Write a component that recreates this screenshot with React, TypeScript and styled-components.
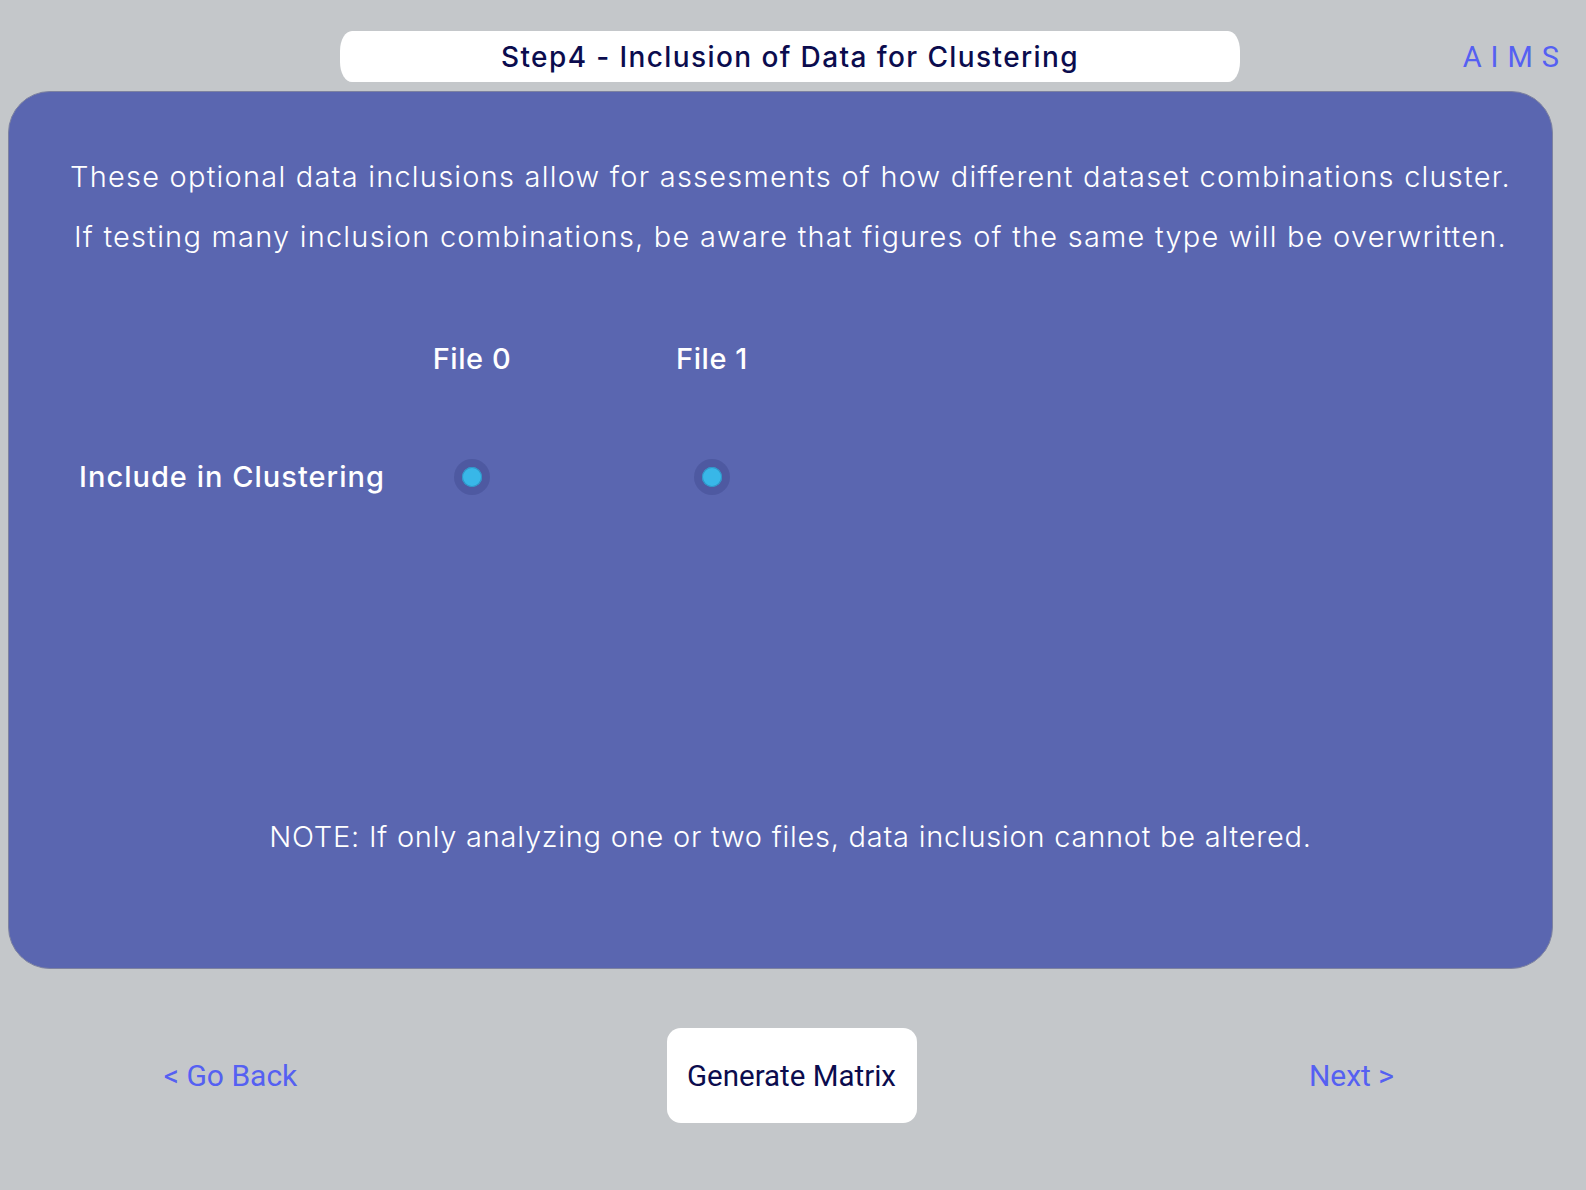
import React from "react";
import styled, { createGlobalStyle } from "styled-components";

const GlobalStyle = createGlobalStyle`
  body {
    margin: 0;
    background: #c4c7ca;
    font-family: "Inter", "Liberation Sans", sans-serif;
  }
`;

const files = ["File 0", "File 1"];

export default function App() {
  return (
    <>
      <GlobalStyle />
      <Page>
        <Header>
          <TitlePill>Step4 - Inclusion of Data for Clustering</TitlePill>
          <Brand>AIMS</Brand>
        </Header>

        <Panel>
          <Intro>
            <p>These optional data inclusions allow for assesments of how different dataset combinations cluster.</p>
            <p>If testing many inclusion combinations, be aware that figures of the same type will be overwritten.</p>
          </Intro>

          <InclusionGrid>
            <span />
            {files.map((f) => (
              <ColumnHead key={f}>{f}</ColumnHead>
            ))}
            <RowLabel>Include in Clustering</RowLabel>
            {files.map((f) => (
              <Cell key={f}>
                <Radio aria-label={`include ${f}`} />
              </Cell>
            ))}
          </InclusionGrid>

          <Note>NOTE: If only analyzing one or two files, data inclusion cannot be altered.</Note>
        </Panel>

        <Nav>
          <NavLink>&lt; Go Back</NavLink>
          <GenerateButton>Generate Matrix</GenerateButton>
          <NavLink>Next &gt;</NavLink>
        </Nav>
      </Page>
    </>
  );
}

const Page = styled.div`
  width: 1586px;
  min-height: 1190px;
`;

const Header = styled.header`
  height: 91px;
  display: flex;
  align-items: center;
  padding: 22px 0 0 340px;
  box-sizing: border-box;
`;

const TitlePill = styled.div`
  width: 900px;
  height: 51px;
  background: #ffffff;
  border-radius: 12px / 20px;
  display: flex;
  align-items: center;
  justify-content: center;
  color: #0b0c4e;
  font-size: 28px;
  font-weight: 500;
  letter-spacing: 0.05em;
`;

const Brand = styled.div`
  margin-left: auto;
  margin-right: 18px;
  color: #5560f2;
  font-family: "Roboto", sans-serif;
  font-size: 29px;
  letter-spacing: 0.31em;
`;

const Panel = styled.main`
  margin-left: 8px;
  width: 1545px;
  height: 878px;
  box-sizing: border-box;
  background: #5a66b0;
  border: 1px solid #7d82a0;
  border-radius: 42px;
  padding: 55px 0 0 20px;
  color: #ffffff;
  display: flex;
  flex-direction: column;
`;

const Intro = styled.div`
  text-align: center;
  font-size: 29px;
  font-weight: 300;
  line-height: 60px;
  letter-spacing: 0.042em;

  & > p {
    margin: 0;
  }
`;

const InclusionGrid = styled.div`
  display: grid;
  grid-template-columns: 273px 240px 240px;
  row-gap: 74px;
  align-items: center;
  margin: 70px 0 0 50px;
`;

const ColumnHead = styled.div`
  text-align: center;
  font-size: 29px;
  font-weight: 500;
  line-height: 44px;
  letter-spacing: 0.02em;
`;

const RowLabel = styled.div`
  font-size: 29px;
  font-weight: 500;
  line-height: 44px;
  letter-spacing: 0.035em;
  white-space: nowrap;
`;

const Cell = styled.div`
  display: flex;
  justify-content: center;
`;

const Radio = styled.span`
  width: 36px;
  height: 36px;
  border-radius: 50%;
  background: rgba(35, 45, 110, 0.22);
  display: flex;
  align-items: center;
  justify-content: center;

  &::after {
    content: "";
    width: 20px;
    height: 20px;
    border-radius: 50%;
    background: #38b7e8;
    box-shadow: inset 0 0 0 1px #2f95c6;
  }
`;

const Note = styled.div`
  margin-top: auto;
  margin-bottom: 114px;
  text-align: center;
  font-size: 29px;
  font-weight: 300;
  letter-spacing: 0.026em;
`;

const Nav = styled.nav`
  display: grid;
  grid-template-columns: 461px 661px 459px;
  align-items: center;
  margin-top: 59px;
`;

const NavLink = styled.a`
  justify-self: center;
  color: #5560f2;
  font-family: "Roboto", sans-serif;
  font-size: 30px;
  cursor: pointer;
`;

const GenerateButton = styled.button`
  justify-self: center;
  width: 250px;
  height: 95px;
  border: none;
  border-radius: 14px;
  background: #ffffff;
  color: #0b0c4e;
  font-family: "Roboto", sans-serif;
  font-size: 29.5px;
  cursor: pointer;
`;
